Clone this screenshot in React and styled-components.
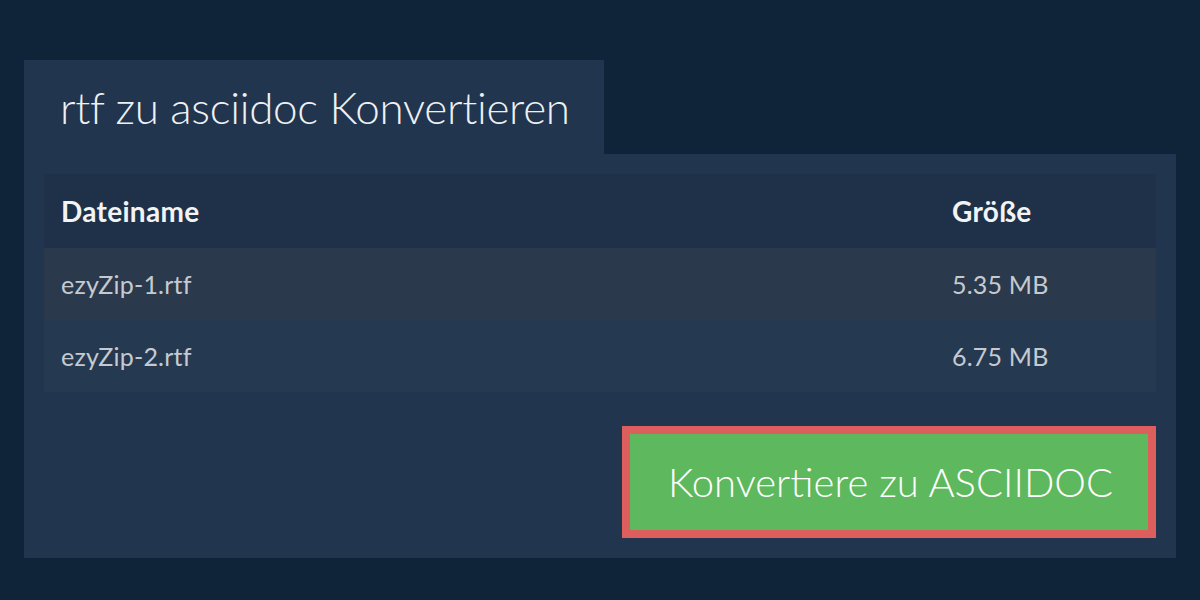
import React from "react";
import styled, { createGlobalStyle } from "styled-components";

const GlobalStyle = createGlobalStyle`
  html, body {
    margin: 0;
    padding: 0;
    background: #0f2339;
    font-family: Lato, "Open Sans", "Liberation Sans", sans-serif;
  }
`;

const Page = styled.div`
  width: 1200px;
  height: 600px;
  box-sizing: border-box;
  padding: 60px 24px 0;
  background: #0f2339;
`;

const Tab = styled.div`
  display: inline-flex;
  align-items: center;
  height: 94px;
  padding: 0 34px 0 36px;
  background: #21354e;
`;

const Title = styled.h1`
  margin: 0;
  font-size: 44px;
  font-weight: 300;
  letter-spacing: -0.3px;
  color: #eef1f4;
`;

const Panel = styled.div`
  background: #21354e;
  padding: 20px;
`;

const Table = styled.div`
  display: grid;
  grid-template-columns: 1fr 221px;
`;

const Row = styled.div`
  display: contents;
  & > div {
    background: ${(p) => p.$bg};
  }
`;

const Cell = styled.div`
  display: flex;
  align-items: center;
  height: ${(p) => (p.$head ? 74 : 72)}px;
  padding: 0 17px;
  font-size: ${(p) => (p.$head ? 28 : 25)}px;
  font-weight: ${(p) => (p.$head ? 700 : 400)};
  letter-spacing: ${(p) => (p.$head ? 0.3 : 0.2)}px;
  color: ${(p) => (p.$head ? "#f2f3f5" : "#c6cad0")};
`;

const Actions = styled.div`
  display: flex;
  justify-content: flex-end;
  margin-top: 34px;
`;

const ConvertButton = styled.button`
  border: 8px solid #dc5f5d;
  background: #5eb85d;
  color: #ffffff;
  font-family: inherit;
  font-size: 40px;
  font-weight: 300;
  height: 112px;
  padding: 0 35px 0 38px;
  cursor: pointer;
`;

const files = [
  { name: "ezyZip-1.rtf", size: "5.35 MB" },
  { name: "ezyZip-2.rtf", size: "6.75 MB" },
];

const rowColors = ["#2a3a4c", "#253a50"];

export default function App() {
  return (
    <>
      <GlobalStyle />
      <Page>
        <Tab>
          <Title>rtf zu asciidoc Konvertieren</Title>
        </Tab>
        <Panel>
          <Table>
            <Row $bg="#1e3148">
              <Cell $head>Dateiname</Cell>
              <Cell $head>Größe</Cell>
            </Row>
            {files.map((f, i) => (
              <Row key={f.name} $bg={rowColors[i]}>
                <Cell>{f.name}</Cell>
                <Cell>{f.size}</Cell>
              </Row>
            ))}
          </Table>
          <Actions>
            <ConvertButton>Konvertiere zu ASCIIDOC</ConvertButton>
          </Actions>
        </Panel>
      </Page>
    </>
  );
}
